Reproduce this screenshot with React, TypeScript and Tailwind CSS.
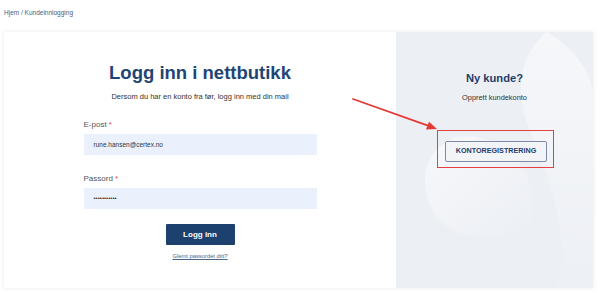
import React from 'react';

const font = { fontFamily: '"Liberation Sans", Arial, sans-serif' };

const PanelBackdrop = () => (
  <svg
    className="absolute inset-0 h-full w-full"
    viewBox="0 0 196 256"
    preserveAspectRatio="none"
    aria-hidden
  >
    <defs>
      <linearGradient id="blob" x1="0" y1="0" x2="1" y2="1">
        <stop offset="0" stopColor="#ffffff" stopOpacity="0.55" />
        <stop offset="1" stopColor="#ffffff" stopOpacity="0" />
      </linearGradient>
      <linearGradient id="band" x1="0" y1="0" x2="0" y2="1">
        <stop offset="0" stopColor="#ffffff" stopOpacity="0.5" />
        <stop offset="1" stopColor="#ffffff" stopOpacity="0.05" />
      </linearGradient>
    </defs>
    <path d="M150 0 C175 15 192 35 196 60 L196 256 L160 256 C175 200 150 140 130 90 C118 55 125 20 150 0 Z" fill="url(#band)" />
    <path d="M60 105 C30 115 18 150 40 185 C60 210 110 212 135 190 C145 150 115 98 60 105 Z" fill="url(#blob)" />
  </svg>
);

export default function App() {
  return (
    <div className="min-h-[295px] w-[600px] bg-white px-[4px] pt-[9px]" style={font}>
      {/* BREADCRUMB */}
      <div className="text-[6.5px] leading-[8px] text-[#3c5f86]">Hjem / Kundeinnlogging</div>

      {/* CARD */}
      <div className="relative mt-[15px] flex h-[256px] w-[589px] bg-white shadow-[0_0_5px_rgba(0,0,0,0.09)]">
        {/* LOGIN */}
        <div className="flex w-[392px] flex-col items-center pt-[30px]">
          <h1 className="text-[18.5px] font-bold leading-[22px] text-[#1e4573]">Logg inn i nettbutikk</h1>
          <p className="mt-[8px] text-[7.5px] leading-[9px] text-[#333]">
            Dersom du har en konto fra før, logg inn med din mail
          </p>

          <div className="mt-[19px] w-[233px]">
            <label className="block text-[8px] leading-[10px] text-[#555]">
              E-post <span className="text-[#e04848]">*</span>
            </label>
            <div className="mt-[4px] flex h-[21px] items-center bg-[#eaf1fd] pl-[10px] text-[6.5px] text-[#333]">
              rune.hansen@certex.no
            </div>

            <label className="mt-[19px] block text-[8px] leading-[10px] text-[#555]">
              Passord <span className="text-[#e04848]">*</span>
            </label>
            <div className="mt-[4px] flex h-[21px] items-center bg-[#eaf1fd] pl-[10px] text-[6px] text-[#333]">
              •••••••••••
            </div>
          </div>

          <button className="mt-[15px] h-[21px] w-[69px] rounded-[1px] bg-[#1d416e] text-[8px] font-bold text-white">
            Logg inn
          </button>
          <a className="mt-[7px] text-[5.8px] leading-[8px] text-[#4b6385] underline">Glemt passordet ditt?</a>
        </div>

        {/* NEW CUSTOMER */}
        <div className="relative flex flex-1 flex-col items-center overflow-hidden bg-[#eceff4] pt-[40px]">
          <PanelBackdrop />
          <h2 className="relative text-[11.2px] font-bold leading-[13px] text-[#1f3e6b]">Ny kunde?</h2>
          <p className="relative mt-[8px] text-[7.4px] leading-[9px] text-[#333]">Opprett kundekonto</p>
          <div className="relative mt-[28px] ml-[2px] border-[1.5px] border-[#e2413f] pt-[5px] pr-[6px] pb-[5px] pl-[7px]">
            <button className="h-[21px] w-[102px] rounded-[2px] border border-[#7d8ca3] bg-[#f2f4f8] text-[7.2px] font-bold text-[#1f3e6b]">
              KONTOREGISTRERING
            </button>
          </div>
        </div>

        {/* ARROW */}
        <svg className="pointer-events-none absolute left-[345px] top-[60px] h-[50px] w-[100px]" viewBox="0 0 100 50">
          <line x1="4" y1="7" x2="79" y2="33.7" stroke="#e53935" strokeWidth="1.8" strokeLinecap="round" />
          <path d="M88 37 L77 37.6 L80 29.8 Z" fill="#e53935" />
        </svg>
      </div>
    </div>
  );
}
